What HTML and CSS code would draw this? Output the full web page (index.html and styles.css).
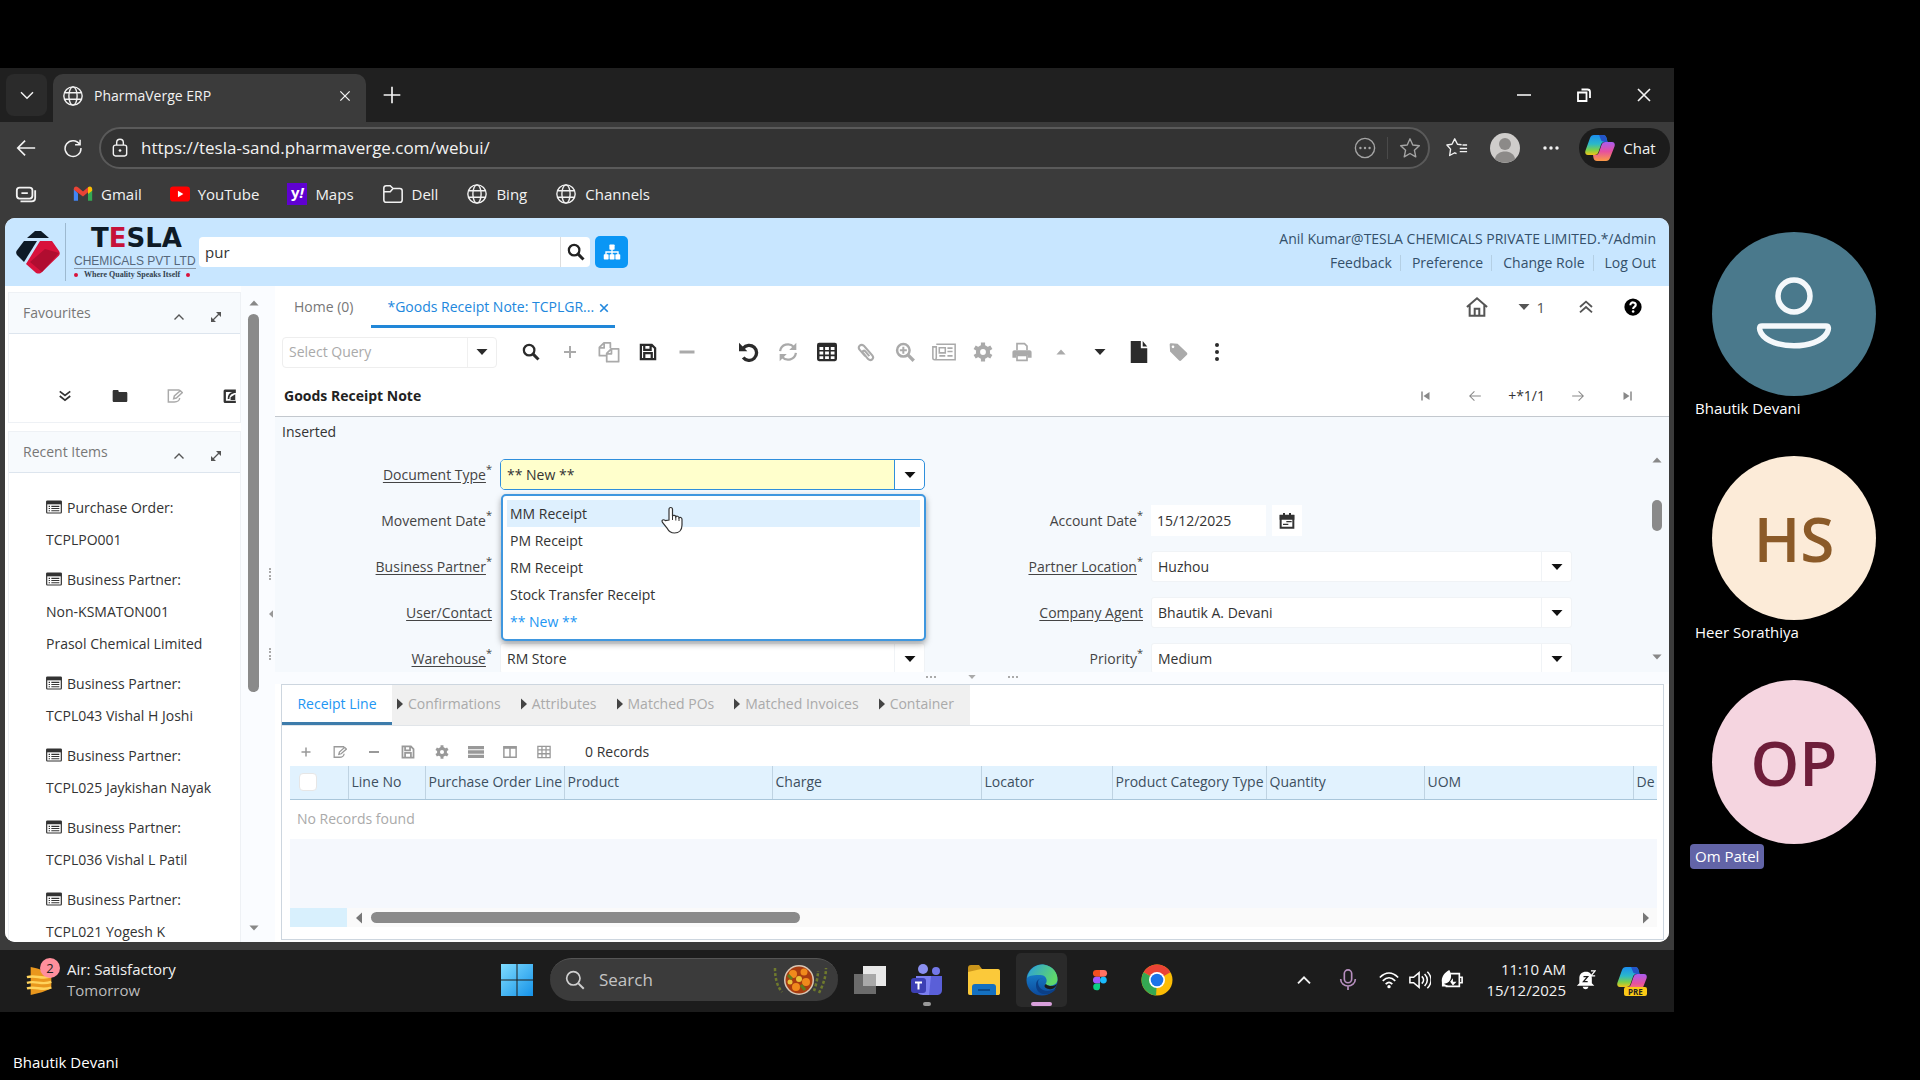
FILE: index.html
```html
<!DOCTYPE html>
<html lang="en">
<head>
<meta charset="utf-8">
<title>PharmaVerge ERP</title>
<link rel="stylesheet" href="styles.css">
</head>
<body>
<svg class="defs" aria-hidden="true">
  <defs>
    <linearGradient id="cpA" x1="0" y1="0" x2="0" y2="1"><stop offset="0" stop-color="#1b8df0"/><stop offset=".45" stop-color="#2bb8c9"/><stop offset=".75" stop-color="#7ccf4a"/><stop offset="1" stop-color="#f2c318"/></linearGradient>
    <linearGradient id="cpB" x1="0" y1="0" x2="0" y2="1"><stop offset="0" stop-color="#a85cf0"/><stop offset=".5" stop-color="#e6509f"/><stop offset="1" stop-color="#fb9a45"/></linearGradient>
    <linearGradient id="winG" x1="0" y1="0" x2="1" y2="1"><stop offset="0" stop-color="#7fdcff"/><stop offset="1" stop-color="#1592e8"/></linearGradient>
    <linearGradient id="edgeA" x1="0" y1="0" x2="1" y2=".4"><stop offset="0" stop-color="#2a9ce0"/><stop offset="1" stop-color="#5fd86a"/></linearGradient>
    <linearGradient id="edgeB" x1="0" y1="0" x2="0" y2="1"><stop offset="0" stop-color="#1b8fd8"/><stop offset="1" stop-color="#0c4a9c"/></linearGradient>
  </defs>
  <symbol id="globe" viewBox="0 0 24 24"><g fill="none" stroke="currentColor" stroke-width="1.5"><circle cx="12" cy="12" r="10"/><ellipse cx="12" cy="12" rx="4.5" ry="10"/><path d="M3 8.5h18M3 15.500h18"/></g></symbol>
  <symbol id="x" viewBox="0 0 24 24"><path d="M4 4l16 16M20 4L4 20" fill="none" stroke="currentColor" stroke-width="2.200"/></symbol>
  <symbol id="xb" viewBox="0 0 24 24"><path d="M3 3l18 18M21 3L3 21" fill="none" stroke="currentColor" stroke-width="4"/></symbol>
  <symbol id="plus" viewBox="0 0 24 24"><path d="M12 2v20M2 12h20" fill="none" stroke="currentColor" stroke-width="2"/></symbol>
  <symbol id="plusb" viewBox="0 0 24 24"><path d="M12 3v18M3 12h18" fill="none" stroke="currentColor" stroke-width="3"/></symbol>
  <symbol id="minusb" viewBox="0 0 24 24"><path d="M2 12h20" fill="none" stroke="currentColor" stroke-width="4"/></symbol>
  <symbol id="down" viewBox="0 0 24 24"><path d="M3 8l9 9 9-9" fill="none" stroke="currentColor" stroke-width="2.200"/></symbol>
  <symbol id="up" viewBox="0 0 24 24"><path d="M3 17l9-9 9 9" fill="none" stroke="currentColor" stroke-width="2.800"/></symbol>
  <symbol id="left" viewBox="0 0 24 24"><path d="M22 12H3M11 4l-8 8 8 8" fill="none" stroke="currentColor" stroke-width="1.800"/></symbol>
  <symbol id="right" viewBox="0 0 24 24"><path d="M2 12h19M13 4l8 8-8 8" fill="none" stroke="currentColor" stroke-width="1.800"/></symbol>
  <symbol id="first" viewBox="0 0 24 24"><path d="M4 3v18" fill="none" stroke="currentColor" stroke-width="3"/><path d="M19 4v16L7 12z" fill="currentColor"/></symbol>
  <symbol id="last" viewBox="0 0 24 24"><path d="M20 3v18" fill="none" stroke="currentColor" stroke-width="3"/><path d="M5 4v16l12-8z" fill="currentColor"/></symbol>
  <symbol id="reload" viewBox="0 0 24 24"><path d="M20 7.500A9.500 9.500 0 1 0 21.500 12M20.500 2v6h-6" fill="none" stroke="currentColor" stroke-width="1.800"/></symbol>
  <symbol id="lock" viewBox="0 0 24 24"><g fill="none" stroke="currentColor" stroke-width="1.700"><rect x="4" y="8.500" width="16" height="13" rx="2.500"/><path d="M8 8.500V5.500a4 4 0 0 1 8 0v3"/></g><circle cx="12" cy="15" r="1.600" fill="currentColor"/></symbol>
  <symbol id="dotring" viewBox="0 0 24 24"><circle cx="12" cy="12" r="10.500" fill="none" stroke="currentColor" stroke-width="1.500"/><g fill="currentColor"><circle cx="7" cy="12" r="1.300"/><circle cx="12" cy="12" r="1.300"/><circle cx="17" cy="12" r="1.300"/></g></symbol>
  <symbol id="star" viewBox="0 0 24 24"><path d="M12 2l3 6.700 7.200.800-5.400 4.900 1.500 7.200L12 18l-6.300 3.600 1.500-7.200-5.400-4.900 7.200-.800z" fill="none" stroke="currentColor" stroke-width="1.500" stroke-linejoin="round"/></symbol>
  <symbol id="starlist" viewBox="0 0 24 24"><path d="M17 8.500l-4.500-.600L9.500 2l-3 5.900-5.500.800 4 4.500-1 7 5.500-3 2 1M15 12.500h8M15 16h8M18 8.700h5" fill="none" stroke="currentColor" stroke-width="1.500" stroke-linejoin="round"/></symbol>
  <symbol id="dots" viewBox="0 0 24 24"><g fill="currentColor"><circle cx="4" cy="12" r="2.300"/><circle cx="12" cy="12" r="2.300"/><circle cx="20" cy="12" r="2.300"/></g></symbol>
  <symbol id="vdots" viewBox="0 0 24 24"><g fill="currentColor"><circle cx="12" cy="3.500" r="2.400"/><circle cx="12" cy="12" r="2.400"/><circle cx="12" cy="20.500" r="2.400"/></g></symbol>
  <symbol id="copilot" viewBox="0 0 30 28"><path d="M9 1h9c2 0 3 1 3.500 3l1 4h-3c-2 0-3 1-3.600 3l-2.400 7c-.7 2-1.800 3-4 3H3c-2.500 0-3.300-2-2.500-4.500L5 4c.7-2 2-3 4-3z" fill="url(#cpA)"/><path d="M21 27h-9c-2 0-3-1-3.500-3l-.500-3h2.500c2 0 3-1 3.600-3l2.400-7c.7-2 1.800-3 4-3H27c2.500 0 3.300 2 2.500 4.500L25 24c-.7 2-2 3-4 3z" fill="url(#cpB)"/><path d="M14 1h4c2 0 3 1 3.500 3l1 4h-3l-3-1z" fill="#2455c8"/></symbol>
  <symbol id="search" viewBox="0 0 24 24"><circle cx="9.500" cy="9.500" r="7" fill="none" stroke="currentColor" stroke-width="3"/><path d="M14.500 14.500L22 22" stroke="currentColor" stroke-width="4"/></symbol>
  <symbol id="searchthin" viewBox="0 0 24 24"><circle cx="10" cy="10" r="8" fill="none" stroke="currentColor" stroke-width="2"/><path d="M16 16l6.500 6.500" stroke="currentColor" stroke-width="2.400"/></symbol>
  <symbol id="sitemap" viewBox="0 0 24 24"><g fill="currentColor"><rect x="8.500" y="2" width="7" height="7" rx="1"/><rect x="1" y="15" width="6.500" height="7" rx="1"/><rect x="8.800" y="15" width="6.500" height="7" rx="1"/><rect x="16.500" y="15" width="6.500" height="7" rx="1"/></g><path d="M12 8v8M4 16v-4h16v4" fill="none" stroke="currentColor" stroke-width="1.800"/></symbol>
  <symbol id="expand" viewBox="0 0 24 24"><path d="M6 18L18 6" fill="none" stroke="currentColor" stroke-width="2.600"/><path d="M12 2h10v10zM12 22H2V12z" fill="currentColor"/></symbol>
  <symbol id="ddown" viewBox="0 0 24 24"><path d="M3 4l9 7 9-7M3 12l9 7 9-7" fill="none" stroke="currentColor" stroke-width="3"/></symbol>
  <symbol id="dup" viewBox="0 0 24 24"><path d="M3 12l9-8 9 8M3 20l9-8 9 8" fill="none" stroke="currentColor" stroke-width="2.800"/></symbol>
  <symbol id="folder" viewBox="0 0 24 24"><path d="M1 5c0-1.200.8-2 2-2h5c1.200 0 2 .8 2 2v1h11c1.200 0 2 .8 2 2v11c0 1.200-.8 2-2 2H3c-1.200 0-2-.8-2-2z" fill="currentColor"/></symbol>
  <symbol id="folderline" viewBox="0 0 24 24"><path d="M2 5.500C2 4 3 3 4.500 3H9l3 3h7.500C21 6 22 7 22 8.500v10c0 1.500-1 2.500-2.500 2.500h-15C3 21 2 20 2 18.500zM2 9.500h7l3-3.500" fill="none" stroke="currentColor" stroke-width="1.700"/></symbol>
  <symbol id="edit" viewBox="0 0 24 24"><path d="M19 3H2v18h9c5 0 8-3 8-6M10 16l1-4 9-8 3 3-9 8z" fill="none" stroke="currentColor" stroke-width="2.200"/></symbol>
  <symbol id="list" viewBox="0 0 24 24"><path d="M2 3h20c.6 0 1 .4 1 1v16c0 .6-.4 1-1 1H2c-.6 0-1-.4-1-1V4c0-.6.400-1 1-1z" fill="none" stroke="currentColor" stroke-width="1.800"/><path d="M1 5.500h22" stroke="currentColor" stroke-width="5"/><path d="M4 11h2M8 11h12M4 14.300h2M8 14.300h12M4 17.600h2M8 17.600h12" stroke="currentColor" stroke-width="1.700"/></symbol>
  <symbol id="book" viewBox="0 0 24 24"><path d="M5 1h17v6C15 7 11 11 11 17H8c0-7 3-11 8-12H5v15h17v4H4c-2 0-3-1-3-3V4c0-2 1-3 4-3z" fill="currentColor"/><path d="M13 14l8-5v10h-8z" fill="currentColor"/></symbol>
  <symbol id="home" viewBox="0 0 24 24"><path d="M1 12L12 2.500 23 12M4 10v11.500h16V10M9.500 21v-7h5v7" fill="none" stroke="currentColor" stroke-width="2.200"/></symbol>
  <symbol id="help" viewBox="0 0 24 24"><circle cx="12" cy="12" r="11.500" fill="#000"/><path d="M8.500 9.500c0-5 7.500-4.500 7.200-.3C15.500 12 12.200 11.500 12.200 14.500" fill="none" stroke="#fff" stroke-width="2.800"/><circle cx="12.200" cy="18" r="1.700" fill="#fff"/></symbol>
  <symbol id="caret" viewBox="0 0 24 24"><path d="M1 6h22L12 18z" fill="currentColor"/></symbol>
  <symbol id="caretup" viewBox="0 0 24 24"><path d="M1 18h22L12 6z" fill="currentColor"/></symbol>
  <symbol id="caretright" viewBox="0 0 24 24"><path d="M6 1v22l12-11z" fill="currentColor"/></symbol>
  <symbol id="caretleft" viewBox="0 0 24 24"><path d="M18 1v22L6 12z" fill="currentColor"/></symbol>
  <symbol id="copy" viewBox="0 0 24 24"><path d="M9.500 16H1.500V7l5-5h7v6M1.500 7.500h5.200V2M9.500 22.500v-9l5-5h8v14zM9.500 14h5.200V8.500" fill="none" stroke="currentColor" stroke-width="1.900" stroke-linejoin="round"/></symbol>
  <symbol id="save" viewBox="0 0 24 24"><path d="M2.500 2.500h14.500l4.500 4.500v14.500h-19zM7 21v-7.500h10V21M7 3v6h8.500V3" fill="none" stroke="currentColor" stroke-width="3"/></symbol>
  <symbol id="undo" viewBox="0 0 24 24"><path d="M5 7.500a9 9 0 1 1 0 11" fill="none" stroke="currentColor" stroke-width="4"/><path d="M0 1v10h10z" fill="currentColor"/></symbol>
  <symbol id="refresh" viewBox="0 0 24 24"><path d="M2.500 11A9.500 9.500 0 0 1 19 6M21.500 13A9.500 9.500 0 0 1 5 18" fill="none" stroke="currentColor" stroke-width="2.700"/><path d="M22 1v8.500h-8.500zM2 23v-8.500h8.500z" fill="currentColor"/></symbol>
  <symbol id="grid" viewBox="0 0 24 24"><rect x="0" y="1" width="24" height="22" rx="2.500" fill="currentColor"/><g fill="#fff"><path d="M3 6h4.500v3.500H3zM9.700 6h4.600v3.500H9.700zM16.500 6H21v3.500h-4.500zM3 11.500h4.500V15H3zM9.700 11.500h4.600V15H9.700zM16.500 11.500H21V15h-4.500zM3 17h4.500v3.500H3zM9.700 17h4.600v3.500H9.700zM16.500 17H21v3.500h-4.500z"/></g></symbol>
  <symbol id="clip" viewBox="0 0 24 24"><path d="M11 17L4.500 9.500C1.500 6 5.500 1.500 9.500 4.500l10 11.500c3 4-1.500 7.500-5 4.500L8.500 13c-1.500-2 1-3.500 2.500-2l5 6" fill="none" stroke="currentColor" stroke-width="2.500"/></symbol>
  <symbol id="zoom" viewBox="0 0 24 24"><circle cx="10" cy="10" r="7.500" fill="none" stroke="currentColor" stroke-width="3"/><path d="M15.500 15.500L22.500 22.500" stroke="currentColor" stroke-width="4"/><path d="M10 5.800v8.400M5.800 10h8.400" stroke="currentColor" stroke-width="2.400"/></symbol>
  <symbol id="news" viewBox="0 0 28 24"><path d="M5 3h22v18H3c-1.500 0-2-1-2-2V6h4v13c0 2-2 2-2 2M8.500 7h7v6h-7zM18 7.500h6M18 11.500h6M8.500 16.500h7M18 16.500h6" fill="none" stroke="currentColor" stroke-width="1.800"/></symbol>
  <symbol id="gear" viewBox="0 0 24 24"><circle cx="12" cy="12" r="6" fill="none" stroke="currentColor" stroke-width="5"/><path d="M12 .500v5M12 18.500v5M2 6.300l4.300 2.500M17.700 15.200l4.300 2.500M2 17.700l4.300-2.500M17.700 8.800L22 6.300" stroke="currentColor" stroke-width="5"/></symbol>
  <symbol id="print" viewBox="0 0 24 24"><path d="M6 10V2h9l3 3v5M6 16h12v6H6z" fill="none" stroke="currentColor" stroke-width="2"/><path d="M3 10h18c1.500 0 2.500 1 2.500 2.500V19H19v-3.500H5V19H.5v-6.500C.5 11 1.500 10 3 10z" fill="currentColor"/></symbol>
  <symbol id="file" viewBox="0 0 24 24"><path d="M3 0h11v8h7v16H3z" fill="currentColor"/><path d="M16 0l5 6h-5z" fill="currentColor"/></symbol>
  <symbol id="tag" viewBox="0 0 24 24"><path d="M2 3c0-1 .8-1.500 2-1.500L11.500 2 22.500 12.500c1 1 1 2 0 3L16 22c-1 1-2 1-3 0L2.500 11.500z" fill="currentColor"/><circle cx="6" cy="5.800" r="1.600" fill="#fff"/></symbol>
  <symbol id="calendar" viewBox="0 0 24 24"><path d="M2.500 4h19v18h-19z" fill="#fff" stroke="currentColor" stroke-width="3"/><path d="M1 3h22v7H1zM6 0h3v4H6zM15 0h3v4h-3z" fill="currentColor"/><path d="M11 13h8M6 17h8" stroke="currentColor" stroke-width="2"/></symbol>
  <symbol id="rows" viewBox="0 0 24 24"><path d="M0 3h24v5H0zM0 9.500h24v5H0zM0 16h24v5H0z" fill="currentColor"/></symbol>
  <symbol id="cols" viewBox="0 0 24 24"><path d="M1.500 3h21v18h-21zM12 3v18" fill="none" stroke="currentColor" stroke-width="2.500"/><path d="M1 4.500h22" stroke="currentColor" stroke-width="4"/></symbol>
  <symbol id="cells" viewBox="0 0 24 24"><path d="M1.500 2.500h21v19h-21zM8.500 3v18M15.500 3v18M2 8.500h20M2 15h20" fill="none" stroke="currentColor" stroke-width="2.200"/></symbol>
</svg>

<div class="call">
  <div class="share">
    <header class="tabstrip">
      <button class="tabmenu" aria-label="Tab actions"><svg class="i16"><use href="#down"/></svg></button>
      <div class="tab">
        <svg class="i22"><use href="#globe"/></svg><span>PharmaVerge ERP</span>
        <button class="tabclose" aria-label="Close tab"><svg class="i14"><use href="#x"/></svg></button>
      </div>
      <button aria-label="New tab"><svg class="i20"><use href="#plus"/></svg></button>
      <div class="wincontrols">
        <button aria-label="Minimise"><svg class="i14" viewBox="0 0 14 14"><path d="M0 7h14" stroke="#fff" stroke-width="1.500"/></svg></button>
        <button aria-label="Restore"><svg class="i14" viewBox="0 0 14 14"><path d="M1 4.500h8.500V13H1zM4.500 1.500h6c1.500 0 2.500 1 2.500 2.500v6" fill="none" stroke="#fff" stroke-width="1.800"/></svg></button>
        <button aria-label="Close"><svg class="i18"><use href="#x"/></svg></button>
      </div>
    </header>
    <div class="navbar">
      <button aria-label="Back"><svg class="i22"><use href="#left"/></svg></button>
      <button aria-label="Reload"><svg class="i20"><use href="#reload"/></svg></button>
      <div class="address">
        <svg class="i20"><use href="#lock"/></svg>
        <input type="text" aria-label="Address" value="https://tesla-sand.pharmaverge.com/webui/">
        <svg class="i22 dim"><use href="#dotring"/></svg><i class="bar"></i><svg class="i22 dim"><use href="#star"/></svg>
      </div>
      <button aria-label="Favourites"><svg class="i22"><use href="#starlist"/></svg></button>
      <button aria-label="Profile"><svg class="i30" viewBox="0 0 30 30"><circle cx="15" cy="15" r="15" fill="#cfcdcb"/><circle cx="15" cy="11" r="6" fill="#8c8a88"/><path d="M5 26c1-10 19-10 20 0a15 15 0 0 1-20 0z" fill="#8c8a88"/></svg></button>
      <button aria-label="Settings"><svg class="i18"><use href="#dots"/></svg></button>
      <button class="chat"><svg class="i30"><use href="#copilot"/></svg>Chat</button>
    </div>
    <nav class="bookmarks">
      <a href="#" aria-label="Tabs"><svg class="i22" viewBox="0 0 24 24"><g fill="none" stroke="currentColor" stroke-width="2"><rect x="2" y="5" width="17" height="12" rx="3"/><path d="M7 11h7M6 20h12c2.500 0 4-1.500 4-4V8"/></g></svg></a>
      <a href="#"><svg class="i20" viewBox="0 0 24 24"><path d="M1 6v14h5V11z" fill="#4285f4"/><path d="M23 6v14h-5V11z" fill="#34a853"/><path d="M1 6c0-3 3-4 5-2l6 5v6L1 7z" fill="#ea4335"/><path d="M12 9l6-5v6l-6 5z" fill="#ea4335"/><path d="M18 4c2-2 5-1 5 2v2l-5 4z" fill="#fbbc04"/></svg>Gmail</a>
      <a href="#"><svg class="i20" viewBox="0 0 24 24"><rect y="3" width="24" height="18" rx="4" fill="#f00"/><path d="M9.500 8v8l6.500-4z" fill="#fff"/></svg>YouTube</a>
      <a href="#"><b class="yahoo">y<i>!</i></b>Maps</a>
      <a href="#"><svg class="i22"><use href="#folderline"/></svg>Dell</a>
      <a href="#"><svg class="i22"><use href="#globe"/></svg>Bing</a>
      <a href="#"><svg class="i22"><use href="#globe"/></svg>Channels</a>
    </nav>

    <div class="page">
      <header class="apphead">
        <svg class="mark" viewBox="0 0 44 44"><path d="M11 8L19 1h6l8 7z" fill="#0e1a26"/><path d="M8 11h13L8 32 1 25c-1-1-1-3-.5-4z" fill="#0e1a26"/><path d="M24 11h12l7 10c1 1.500 1 3 0 4.500L26 42c-2 2-5 2-7 0L10 34z" fill="#d8123c"/><path d="M29 19l14 4-17 19-12-10z" fill="#b00d30"/></svg>
        <div class="brand"><strong>T<em>E</em>SLA</strong><span>CHEMICALS PVT LTD</span><small><i></i>Where Quality Speaks Itself<i></i></small></div>
        <form class="find"><input type="text" aria-label="Search menu" value="pur"><button type="button" aria-label="Search"><svg class="i18"><use href="#search"/></svg></button></form>
        <button class="tree" aria-label="Menu tree"><svg class="i18"><use href="#sitemap"/></svg></button>
        <div class="user">
          <span>Anil Kumar@TESLA CHEMICALS PRIVATE LIMITED.*/Admin</span>
          <nav><a href="#">Feedback</a><a href="#">Preference</a><a href="#">Change Role</a><a href="#">Log Out</a></nav>
        </div>
      </header>

      <div class="appbody">
        <aside class="side">
          <section class="panel">
            <h2>Favourites<button aria-label="Collapse"><svg class="i12"><use href="#up"/></svg></button><button aria-label="Maximise"><svg class="i12"><use href="#expand"/></svg></button></h2>
            <div class="favtools">
              <button aria-label="Expand all"><svg class="i14"><use href="#ddown"/></svg></button>
              <button aria-label="Folder"><svg class="i16"><use href="#folder"/></svg></button>
              <button aria-label="Edit" class="off"><svg class="i16"><use href="#edit"/></svg></button>
              <button aria-label="Add"><svg class="i14"><use href="#book"/></svg></button>
            </div>
          </section>
          <section class="panel recent">
            <h2>Recent Items<button aria-label="Collapse"><svg class="i12"><use href="#up"/></svg></button><button aria-label="Maximise"><svg class="i12"><use href="#expand"/></svg></button></h2>
            <ul>
              <li><a href="#"><svg class="i16"><use href="#list"/></svg>Purchase Order:<br>TCPLPO001</a></li>
              <li><a href="#"><svg class="i16"><use href="#list"/></svg>Business Partner:<br>Non-KSMATON001<br>Prasol Chemical Limited</a></li>
              <li><a href="#"><svg class="i16"><use href="#list"/></svg>Business Partner:<br>TCPL043 Vishal H Joshi</a></li>
              <li><a href="#"><svg class="i16"><use href="#list"/></svg>Business Partner:<br>TCPL025 Jaykishan Nayak</a></li>
              <li><a href="#"><svg class="i16"><use href="#list"/></svg>Business Partner:<br>TCPL036 Vishal L Patil</a></li>
              <li><a href="#"><svg class="i16"><use href="#list"/></svg>Business Partner:<br>TCPL021 Yogesh K</a></li>
            </ul>
          </section>
        </aside>
        <div class="vscroll"><svg class="i10"><use href="#caretup"/></svg><i></i><svg class="i10"><use href="#caret"/></svg></div>
        <div class="split"><i class="grip"></i><svg class="i8"><use href="#caretleft"/></svg><i class="grip"></i></div>

        <main>
          <div class="wtabs">
            <a href="#">Home (0)</a>
            <a href="#" class="on">*Goods Receipt Note: TCPLGR...<svg class="i10"><use href="#xb"/></svg></a>
            <div class="wright">
              <button aria-label="Home"><svg class="i22"><use href="#home"/></svg></button>
              <button class="count"><svg class="i12"><use href="#caret"/></svg>1</button>
              <button aria-label="Collapse header"><svg class="i16"><use href="#dup"/></svg></button>
              <button aria-label="Help"><svg class="i18"><use href="#help"/></svg></button>
            </div>
          </div>
          <div class="toolbar">
            <div class="query"><input type="text" aria-label="Query" placeholder="Select Query"><button aria-label="Open queries"><svg class="i12"><use href="#caret"/></svg></button></div>
            <div class="tools">
              <button aria-label="Find"><svg class="i18"><use href="#search"/></svg></button>
              <button aria-label="New" class="off"><svg class="i16"><use href="#plusb"/></svg></button>
              <button aria-label="Copy" class="off"><svg class="i22"><use href="#copy"/></svg></button>
              <button aria-label="Save"><svg class="i18"><use href="#save"/></svg></button>
              <button aria-label="Delete" class="off"><svg class="i18"><use href="#minusb"/></svg></button>
            </div>
            <div class="tools">
              <button aria-label="Undo"><svg class="i20"><use href="#undo"/></svg></button>
              <button aria-label="Refresh" class="off"><svg class="i20"><use href="#refresh"/></svg></button>
              <button aria-label="Grid"><svg class="i20"><use href="#grid"/></svg></button>
              <button aria-label="Attachment" class="off"><svg class="i20"><use href="#clip"/></svg></button>
              <button aria-label="Zoom" class="off"><svg class="i20"><use href="#zoom"/></svg></button>
              <button aria-label="Report" class="off"><svg class="i24"><use href="#news"/></svg></button>
              <button aria-label="Process" class="off"><svg class="i20"><use href="#gear"/></svg></button>
              <button aria-label="Print" class="off"><svg class="i20"><use href="#print"/></svg></button>
              <button aria-label="Parent" class="off"><svg class="i10"><use href="#caretup"/></svg></button>
              <button aria-label="Detail"><svg class="i12"><use href="#caret"/></svg></button>
              <button aria-label="File"><svg class="i22"><use href="#file"/></svg></button>
              <button aria-label="Label" class="off"><svg class="i20"><use href="#tag"/></svg></button>
              <button aria-label="More"><svg class="i20"><use href="#vdots"/></svg></button>
            </div>
          </div>
          <div class="titlebar">
            <h1>Goods Receipt Note</h1>
            <div class="pager">
              <button aria-label="First"><svg class="i12"><use href="#first"/></svg></button>
              <button aria-label="Previous"><svg class="i14"><use href="#left"/></svg></button>
              <span>+*1/1</span>
              <button aria-label="Next"><svg class="i14"><use href="#right"/></svg></button>
              <button aria-label="Last"><svg class="i12"><use href="#last"/></svg></button>
            </div>
          </div>

          <div class="formwrap">
            <p class="status">Inserted</p>
            <form class="grid">
              <label for="doctype"><u>Document Type</u><sup>*</sup></label>
              <div class="sel active"><select id="doctype"><option>** New **</option></select><span><svg class="i12"><use href="#caret"/></svg></span>
                <ul class="menu"><li class="hover">MM Receipt</li><li>PM Receipt</li><li>RM Receipt</li><li>Stock Transfer Receipt</li><li class="chosen">** New **</li></ul>
                <svg class="hand" viewBox="0 0 24 28"><path d="M9 14V3.500c0-2.700 3.500-2.700 3.500 0V10c.5-1 3-1 3.300.8.7-1 2.900-.8 3.200 1 .800-.8 3-.5 3 1.700V19c0 5-3 8-7.500 8-4 0-6-2-7.500-5l-4.500-5.500c-1.500-2.500 1-3.500 2.800-2z" fill="#fff" stroke="#333" stroke-width="1.200"/><path d="M12.500 10v4M15.800 11v3.500M19 12v3" stroke="#333"/></svg>
              </div>
              <i></i><i></i>

              <label for="movedate">Movement Date<sup>*</sup></label>
              <div class="date"><input id="movedate" type="text"></div>
              <label for="acctdate">Account Date<sup>*</sup></label>
              <div class="date"><input id="acctdate" type="text" value="15/12/2025"><button type="button" aria-label="Pick date"><svg class="i16"><use href="#calendar"/></svg></button></div>

              <label for="bp"><u>Business Partner</u><sup>*</sup></label>
              <div class="sel"><select id="bp"><option></option></select><span><svg class="i12"><use href="#caret"/></svg></span></div>
              <label for="loc"><u>Partner Location</u><sup>*</sup></label>
              <div class="sel"><select id="loc"><option>Huzhou</option></select><span><svg class="i12"><use href="#caret"/></svg></span></div>

              <label for="contact"><u>User/Contact</u></label>
              <div class="sel"><select id="contact"><option></option></select><span><svg class="i12"><use href="#caret"/></svg></span></div>
              <label for="agent"><u>Company Agent</u></label>
              <div class="sel"><select id="agent"><option>Bhautik A. Devani</option></select><span><svg class="i12"><use href="#caret"/></svg></span></div>

              <label for="wh"><u>Warehouse</u><sup>*</sup></label>
              <div class="sel"><select id="wh"><option>RM Store</option></select><span><svg class="i12"><use href="#caret"/></svg></span></div>
              <label for="prio">Priority<sup>*</sup></label>
              <div class="sel"><select id="prio"><option>Medium</option></select><span><svg class="i12"><use href="#caret"/></svg></span></div>
            </form>
            <div class="fscroll"><svg class="i10"><use href="#caretup"/></svg><i></i><svg class="i10"><use href="#caret"/></svg></div>
          </div>
          <div class="hsplit"><i class="grip"></i><svg class="i8"><use href="#caret"/></svg><i class="grip"></i></div>

          <section class="detail">
            <nav class="dtabs">
              <a href="#" class="on">Receipt Line</a>
              <div>
                <a href="#"><svg class="i12"><use href="#caretright"/></svg>Confirmations</a>
                <a href="#"><svg class="i12"><use href="#caretright"/></svg>Attributes</a>
                <a href="#"><svg class="i12"><use href="#caretright"/></svg>Matched POs</a>
                <a href="#"><svg class="i12"><use href="#caretright"/></svg>Matched Invoices</a>
                <a href="#"><svg class="i12"><use href="#caretright"/></svg>Container</a>
              </div>
            </nav>
            <div class="dtools">
              <button aria-label="Add"><svg class="i12"><use href="#plusb"/></svg></button>
              <button aria-label="Edit"><svg class="i14"><use href="#edit"/></svg></button>
              <button aria-label="Remove"><svg class="i12"><use href="#minusb"/></svg></button>
              <button aria-label="Save"><svg class="i14"><use href="#save"/></svg></button>
              <button aria-label="Process"><svg class="i14"><use href="#gear"/></svg></button>
              <button aria-label="Form"><svg class="i16"><use href="#rows"/></svg></button>
              <button aria-label="Columns"><svg class="i14"><use href="#cols"/></svg></button>
              <button aria-label="Grid"><svg class="i14"><use href="#cells"/></svg></button>
              <span>0 Records</span>
            </div>
            <div class="gridbox">
              <table>
                <colgroup><col class="c58"><col class="c77"><col class="c139"><col class="c208"><col class="c209"><col class="c131"><col class="c154"><col class="c158"><col class="c209"><col></colgroup>
                <thead><tr><th><input type="checkbox" aria-label="Select all"></th><th>Line No</th><th>Purchase Order Line</th><th>Product</th><th>Charge</th><th>Locator</th><th>Product Category Type</th><th>Quantity</th><th>UOM</th><th>De</th></tr></thead>
                <tbody><tr><td colspan="10">No Records found</td></tr></tbody>
              </table>
              <div class="hscroll"><b></b><svg class="i12"><use href="#caretleft"/></svg><i></i><svg class="i12 end"><use href="#caretright"/></svg></div>
            </div>
          </section>
        </main>
      </div>
    </div>

    <footer class="taskbar">
      <button class="weather">
        <span class="wicon"><svg class="i30" viewBox="0 0 30 32"><path d="M4 2c10 2 18 5 22 9v14l-10 4-12 3z" fill="#e9971d"/><path d="M0 13c10-3 15 3 26-1M0 19c10-3 15 3 26-1M0 25c10-3 15 3 26-1" fill="none" stroke="#ffd35c" stroke-width="2.500"/></svg><b>2</b></span>
        <span class="two"><span>Air: Satisfactory</span><small>Tomorrow</small></span>
      </button>
      <div class="apps">
        <button aria-label="Start"><svg class="i32" viewBox="0 0 32 32"><path d="M0 0h15.500v15.500H0zM16.500 0H32v15.500H16.500zM0 16.500h15.500V32H0zM16.500 16.500H32V32H16.500z" fill="url(#winG)"/></svg></button>
        <div class="tsearch"><svg class="i20"><use href="#searchthin"/></svg><input type="text" aria-label="Search" placeholder="Search">
          <svg class="bowl" viewBox="0 0 56 34"><g fill="none" stroke="#6f7a2d" stroke-width="2.500" stroke-dasharray="3 2"><path d="M2 5c0 10 2 18 7 24M46 30c4-8 7-16 7-25M41 28c2-6 4-14 4-20"/></g><circle cx="26" cy="17" r="15" fill="#d9c8b6"/><circle cx="26" cy="17" r="13.500" fill="#a83c10"/><g fill="#f08a1c"><circle cx="20" cy="11" r="4"/><circle cx="31" cy="9" r="3.500"/><circle cx="33" cy="19" r="4"/><circle cx="23" cy="24" r="4"/></g><g fill="#e9c23a"><circle cx="26" cy="16" r="3"/><circle cx="17" cy="19" r="2.500"/></g><path d="M28 22l4 5M15 12l4 4" stroke="#5e7d1d" stroke-width="3"/></svg></div>
        <button aria-label="Task view"><svg class="i32" viewBox="0 0 32 32"><path d="M0 10h22v20H0z" fill="#6b6b6b"/><path d="M9 2h23v20H9z" fill="#e8e8e8"/><path d="M9 10h13v12H9z" fill="#a8a8a8"/></svg></button>
        <button aria-label="Teams" class="running"><svg class="i32" viewBox="0 0 32 32"><circle cx="12" cy="5" r="5" fill="#8b90f0"/><circle cx="25" cy="7" r="4" fill="#7378e8"/><path d="M5 12h15v19h-8c-5 0-7-3-7-7z" fill="#7b7ff0"/><path d="M20 12h11v14c0 4-3 5-5 5h-8z" fill="#5a5fd8"/><rect y="14" width="15" height="15" rx="3" fill="#3c3fb4"/><path d="M4 18.500h7M7.500 18.500v7" stroke="#fff" stroke-width="2"/></svg></button>
        <button aria-label="File Explorer"><svg class="i32" viewBox="0 0 32 32"><path d="M0 4c0-2 1-3 3-3h8l3 4h14v6H0z" fill="#c9941b"/><path d="M0 8l13-3h17c1.500 0 2 1 2 2v22c0 1.500-1 2-2 2H2c-1.500 0-2-1-2-2z" fill="#fbc93a"/><path d="M4 31V23c0-2 1-3 3-3h18c2 0 3 1 3 3v8z" fill="#1470c0"/><path d="M10 26h12" stroke="#0a4b8c" stroke-width="2"/></svg></button>
        <button aria-label="Edge" class="current"><svg class="i32" viewBox="0 0 32 32"><circle cx="16" cy="16" r="15.500" fill="url(#edgeB)"/><path d="M1 14C3 4 12 0 18 .7 27 2 32 9 31.500 16c-.5 6-9 7-12 4 3-4 0-9-5-9-6 0-11 0-13.500 3z" fill="url(#edgeA)"/><path d="M12 18c0 7 7 11 14 8l4-1c-6 8-20 7-20-4 0-5 4-7 7-7-3 0-5 2-5 4z" fill="#0b3f86"/><path d="M20 20c2 3 9 2.500 11 0-1 3-4 6-8 5-4-.5-6-3-3-5z" fill="#1c1c1c"/></svg></button>
        <button aria-label="Figma"><svg class="i22" viewBox="0 0 24 24"><path d="M12 1H8a3.700 3.700 0 0 0 0 7.400h4z" fill="#f24e1e"/><path d="M12 1h4a3.700 3.700 0 0 1 0 7.400h-4z" fill="#ff7262"/><path d="M12 8.400H8a3.700 3.700 0 0 0 0 7.400h4z" fill="#a259ff"/><circle cx="15.700" cy="12.100" r="3.700" fill="#1abcfe"/><path d="M12 15.800H8a3.700 3.700 0 1 0 4 3.700z" fill="#0acf83"/></svg></button>
        <button aria-label="Chrome"><svg class="i32" viewBox="0 0 32 32"><circle cx="16" cy="16" r="15.500" fill="#fbbc05"/><path d="M16 16L2.600 8.200A15.500 15.500 0 0 1 29.400 8.200z" fill="#ea4335"/><path d="M16 16l-1 15.500A15.500 15.500 0 0 1 2.600 8.200z" fill="#34a853"/><circle cx="16" cy="16" r="8" fill="#fff"/><circle cx="16" cy="16" r="6.300" fill="#1a73e8"/></svg></button>
      </div>
      <div class="tray">
        <svg class="i16"><use href="#up"/></svg>
        <svg class="i22" viewBox="0 0 24 24"><g fill="none" stroke="#b78fbf" stroke-width="1.800"><rect x="8" y="1" width="8" height="14" rx="4"/><path d="M4 11c0 10 16 10 16 0M12 18.500V23"/></g></svg>
        <svg class="i20" viewBox="0 0 24 24"><g fill="none" stroke="#fff" stroke-width="2"><path d="M1 9c7-7 15-7 22 0M4.500 13c5-5 10-5 15 0M8 17c3-3 5-3 8 0"/></g><circle cx="12" cy="20" r="2" fill="#fff"/></svg>
        <svg class="i22" viewBox="0 0 24 24"><path d="M1 9h4l6-5v16l-6-5H1zM14 8c2.500 2.500 2.500 5.500 0 8M17 5.500c4 4 4 9 0 13M20 3c5.500 5.500 5.500 12.500 0 18" fill="none" stroke="#fff" stroke-width="1.700"/></svg>
        <svg class="i22" viewBox="0 0 24 24"><path d="M10 5h10v14H5M20 9h3v6h-3" fill="none" stroke="#fff" stroke-width="1.800"/><path d="M1 15C0 8 4 4 9 1c3 5 3 11-2 14-2 1-3 1-4 1l6 3-8 0zM10 14l3-4v4h4l-4 4z" fill="#fff"/></svg>
        <div class="clock"><span>11:10 AM</span><span>15/12/2025</span></div>
        <svg class="i20" viewBox="0 0 24 24"><path d="M12 2c5 0 7 3 7 8v6l3 3H1l3-3v-6c0-5 3-8 8-8zM8 20h7c-1 4-6 4-7 0z" fill="#fff"/><path d="M9 8h5l-5 6h5" fill="none" stroke="#1c1c1c" stroke-width="1.600"/><path d="M18 1h5l-5 6h5" fill="none" stroke="#fff" stroke-width="1.600"/></svg>
        <span class="pre"><svg class="i30"><use href="#copilot"/></svg><b>PRE</b></span>
      </div>
    </footer>
  </div>

  <aside class="people">
    <figure><div class="face teal"><svg viewBox="0 0 164 164"><g fill="none" stroke="#f4f8fb" stroke-width="5.500"><circle cx="82" cy="64" r="16"/><path d="M50 94h64c3 0 3 3 1 7-10 17-56 17-66 0-2-4-2-7 1-7z"/></g></svg></div><figcaption>Bhautik Devani</figcaption></figure>
    <figure><div class="face sand">HS</div><figcaption>Heer Sorathiya</figcaption></figure>
    <figure><div class="face pink">OP</div><figcaption class="talking">Om Patel</figcaption></figure>
  </aside>
</div>
<p class="presenter">Bhautik Devani</p>
</body>
</html>
```
FILE: styles.css
```css
* { box-sizing: border-box; }
body { margin: 0; background: #000; color: #333; font: 15px/20px "Open Sans", "Noto Sans", sans-serif; min-height: 100vh; display: flex; flex-direction: column; padding-top: 68px; }
button, input, select { font: inherit; color: inherit; background: none; border: 0; padding: 0; margin: 0; outline: 0; }
button { display: flex; align-items: center; justify-content: center; }
a { color: inherit; text-decoration: none; }
ul, p, figure, h1, h2 { margin: 0; padding: 0; list-style: none; }
i { font-style: normal; }
svg { flex: none; display: block; }
.defs { position: absolute; width: 0; height: 0; }
.i8 { width: 8px; height: 8px; } .i10 { width: 10px; height: 10px; } .i12 { width: 12px; height: 12px; }
.i14 { width: 14px; height: 14px; } .i16 { width: 16px; height: 16px; } .i18 { width: 18px; height: 18px; }
.i20 { width: 20px; height: 20px; } .i22 { width: 22px; height: 22px; } .i24 { width: 24px; height: 24px; }
.i30 { width: 30px; height: 30px; } .i32 { width: 32px; height: 32px; }

.call { display: flex; }
.share { flex: 1; min-width: 0; background: #3b3b3b; color: #f2f2f2; }

/* browser chrome */
.tabstrip { display: flex; height: 54px; background: #202020; padding: 6px 0 0 6px; }
.tabmenu { width: 41px; height: 42px; background: #2b2b2b; border-radius: 8px; }
.tab { display: flex; align-items: center; gap: 10px; width: 313px; margin: 0 16px 0 6px; padding: 0 14px 4px 9px; background: #3b3b3b; border-radius: 10px 10px 0 0; font-size: 14px; }
.tabclose { margin-left: auto; }
.tabstrip > button { align-self: flex-start; height: 42px; }
.wincontrols { display: flex; margin-left: auto; height: 42px; }
.wincontrols button { width: 60px; }
.navbar { display: flex; align-items: center; height: 52px; padding: 0 4px 0 15px; }
.navbar > button { flex: none; margin-left: 22px; }
.navbar > button:first-child { margin-left: 0; }
.navbar > button:nth-child(2) { margin-left: 26px; }
.navbar .address { flex: 1; display: flex; align-items: center; gap: 11px; height: 42px; margin-left: 16px; margin-right: -6px; padding: 0 7px 0 9px; border: 2px solid #5a5a5a; border-radius: 21px; background: #333; }
.address input { flex: 1; font-size: 17px; }
.address .bar { width: 1px; height: 22px; background: #4a4a4a; }
.dim { color: #a5a5a5; }
.navbar .chat { gap: 8px; height: 40px; width: 91px; margin-left: 19px; background: #1c1c1c; border-radius: 20px; padding-right: 8px; }
.bookmarks { display: flex; align-items: center; height: 44px; padding: 0 15px 4px; gap: 28px; }
.bookmarks a { display: flex; align-items: center; gap: 8px; }
.bookmarks a:first-child { padding-right: 8px; }
.yahoo { width: 20px; height: 22px; background: #5f01d1; color: #fff; text-align: center; line-height: 18px; }
.yahoo i { font-style: italic; }

/* application */
.page { margin: 0 5px 8px; background: #fafcff; border-radius: 10px; overflow: hidden; color: #333; }
.apphead { display: flex; align-items: center; height: 68px; background: #c8e6ff; padding: 0 13px 0 11px; }
.mark { width: 44px; height: 44px; margin-right: 5px; }
.brand { width: 134px; border-left: 1px solid #9db9d0; padding-left: 8px; display: flex; flex-direction: column; align-items: flex-start; }
.brand strong { font: bold 26px/31px "DejaVu Sans", sans-serif; color: #0e1a26; align-self: center; }
.brand em { font-style: normal; color: #c6123a; }
.brand span { font: 12px/14px "Liberation Sans", sans-serif; color: #56677a; border-bottom: 1px solid #8a9aab; white-space: nowrap; }
.brand small { font: bold 8px/12px "Liberation Serif", serif; color: #33424f; display: flex; align-items: center; gap: 6px; white-space: nowrap; }
.brand small i { width: 4px; height: 4px; border-radius: 2px; background: #d8123c; }
.find { display: flex; width: 391px; height: 30px; background: #fff; border-radius: 4px; }
.find input { flex: 1; padding-left: 6px; }
.find button { width: 30px; border-left: 1px solid #ddd; color: #222; }
.tree { width: 33px; height: 32px; margin-left: 5px; border-radius: 5px; background: #0a96f5; color: #fff; }
.user { margin-left: auto; text-align: right; font-size: 14px; color: #34506a; line-height: 20px; padding-bottom: 4px; }
.user nav { display: flex; justify-content: flex-end; }
.user nav a { line-height: 16px; padding-left: 11px; margin-left: 8px; border-left: 1px solid #b4cfe4; margin-top: 6px; }
.user nav a:first-child { border: 0; }

.appbody { display: flex; height: 656px; }
.side { width: 236px; padding: 6px 0 0 3px; display: flex; flex-direction: column; gap: 8px; background: #fff; overflow: hidden; }
.panel { border: 1px solid #eef1f5; }
.panel h2 { display: flex; align-items: center; height: 41px; padding: 0 18px 0 14px; background: #f7fafd; border-bottom: 1px solid #dde5ee; font-weight: 400; font-size: 14px; color: #777; }
.panel h2 button { margin-left: 25px; padding-top: 8px; color: #555; }
.panel h2 button:nth-of-type(1) { margin-left: auto; }
.favtools { display: flex; height: 88px; padding: 45px 0 0 36px; overflow: hidden; }
.favtools button { flex: none; width: 40px; height: 34px; margin-right: 15px; }
.recent { flex: 1; border-bottom: 0; }
.recent ul { padding: 19px 0 0 37px; }
.recent li { margin-bottom: 8px; font-size: 14px; line-height: 32px; white-space: nowrap; }
.recent li svg { display: inline-block; vertical-align: -2px; margin-right: 5px; }
.vscroll { width: 25px; display: flex; flex-direction: column; align-items: center; padding: 12px 0 9px; color: #888; }
.vscroll i { width: 11px; height: 378px; margin: 6px 0 auto; background: #8a8a8a; border-radius: 6px; }
.split { width: 9px; display: flex; flex-direction: column; align-items: center; justify-content: center; gap: 30px; color: #999; }
.grip { height: 12px; width: 4px; border-left: 2px dotted #aaa; }

main { flex: 1; min-width: 0; display: flex; flex-direction: column; background: #fff; }
.wtabs { display: flex; height: 42px; padding-left: 2px; color: #777; font-size: 14px; }
.wtabs > a { padding: 11px 17px 0; margin-right: 1px; }
.wtabs .on { display: flex; gap: 5px; color: #2187dd; border-bottom: 3px solid #2187d8; padding: 11px 6px 0 16px; }
.wtabs .on svg { margin-top: 6px; }
.wright { margin-left: auto; display: flex; align-items: center; gap: 30px; padding-right: 27px; color: #555; font-size: 15px; }
.wright .count { gap: 6px; padding-right: 3px; }
.toolbar { display: flex; align-items: center; height: 48px; padding-left: 7px; color: #2b2b2b; }
.query { display: flex; width: 215px; height: 31px; border: 1px solid #eee; border-radius: 4px; }
.query input { flex: 1; min-width: 0; padding-left: 6px; font-size: 14px; }
.query input::placeholder { color: #aaa; opacity: 1; }
.query button { width: 29px; border-left: 1px solid #f0f0f0; }
.tools { display: flex; margin-left: 14px; }
.tools + .tools { margin-left: 23px; }
.tools button { width: 39px; height: 32px; }
.off { color: #aaa; }
.titlebar { display: flex; align-items: center; justify-content: space-between; height: 41px; padding: 0 36px 0 9px; border-bottom: 1px solid #c3c8ce; }
h1 { font-size: 14px; line-height: 20px; font-weight: 700; color: #222; }
.pager { display: flex; align-items: center; gap: 36px; color: #888; font-size: 14px; }
.pager span { color: #333; margin: 0 -10px; }

.formwrap { display: flex; flex-wrap: wrap; height: 255px; background: #f5f9fd; }
.status { width: 100%; height: 42px; padding: 5px 7px; font-size: 14px; }
.grid { flex: 1; display: grid; grid-template-columns: 225px 425px 226px 421px; grid-auto-rows: 31px; row-gap: 15px; height: 213px; clip-path: inset(0 0 0 0); font-size: 14px; }
.grid label { text-align: right; padding: 6px 8px 0 0; color: #444; white-space: nowrap; }
.grid sup { font-size: 11px; line-height: 0; vertical-align: 7px; }
.grid u { text-underline-offset: 2px; }
.sel { position: relative; display: flex; background: #fff; border: 1px solid #f0f3f6; border-radius: 3px; }
.sel select { flex: 1; appearance: none; padding: 1px 6px 0; }
.sel > span { width: 30px; display: flex; align-items: center; justify-content: center; border-left: 1px solid #f0f3f6; color: #111; pointer-events: none; }
.active { border: 1px solid #2f8fdc; border-radius: 5px; }
.active select { background: #ffffcc; border-radius: 4px 0 0 4px; }
.active > span { border-left: 1px solid #2f8fdc; }
.menu { position: absolute; z-index: 2; left: 0; top: 34px; width: 425px; padding: 4px; background: #fff; border: 2px solid #3f97df; border-radius: 5px; box-shadow: 0 3px 6px rgba(0,0,0,.35); line-height: 27px; }
.menu li { padding: 0 3px; }
.menu .hover { background: #def0fe; }
.menu .chosen { color: #2196f3; }
.hand { position: absolute; z-index: 3; left: 159px; top: 46px; width: 24px; height: 28px; }
.date { display: flex; gap: 6px; }
.date input { width: 115px; padding: 0 6px; background: #fff; }
.date button { width: 30px; background: #fff; }
.fscroll { width: 25px; display: flex; flex-direction: column; align-items: center; padding-bottom: 10px; height: 217px; margin-top: -4px; color: #888; }
.fscroll i { width: 10px; height: 31px; margin: 35px 0 auto; border-radius: 5px; background: #8a8a8a; }
.hsplit { display: flex; align-items: center; justify-content: center; gap: 32px; height: 12px; padding-bottom: 3px; color: #aaa; background: #fafcff; }
.hsplit .grip { height: 2px; width: 10px; border: 0; border-top: 2px dotted #aaa; }

.detail { flex: 1; margin: 0 5px 2px 6px; border: 1px solid #cdd6df; background: #fff; font-size: 14px; }
.dtabs { display: flex; height: 41px; border-bottom: 1px solid #e1e5e9; color: #aaa; }
.dtabs .on { width: 110px; text-align: center; line-height: 38px; color: #2196f3; border-bottom: 3px solid #3d7cab; }
.dtabs div { display: flex; background: #f0f0f0; gap: 17px; padding: 0 16px 0 2px; }
.dtabs div a { display: flex; align-items: center; gap: 2px; padding-bottom: 2px; }
.dtabs svg { color: #444; }
.dtools { display: flex; align-items: center; height: 39px; padding: 12px 0 0 7px; color: #999; }
.dtools button { width: 34px; height: 24px; }
.dtools span { color: #333; margin-left: 24px; }
.gridbox { margin: 1px 6px 0 8px; background: #f5f8fd; height: 161px; display: flex; flex-direction: column; justify-content: space-between; }
table { table-layout: fixed; width: 100%; border-collapse: collapse; }
.c58 { width: 58px; } .c77 { width: 77px; } .c139 { width: 139px; } .c208 { width: 208px; } .c209 { width: 209px; } .c131 { width: 131px; } .c154 { width: 154px; } .c158 { width: 158px; }
th { height: 33px; padding: 0 0 0 3px; background: #e1f2fe; border-right: 1px solid #bfd3e2; border-bottom: 1px solid #a9c6da; text-align: left; font-weight: 400; color: #3d4f5e; white-space: nowrap; }
th:last-child { border-right: 0; }
th input { appearance: none; display: block; width: 18px; height: 18px; margin-left: 6px; background: #fff; border: 1px solid #e6e6e6; border-radius: 4px; }
td { height: 40px; padding: 0 7px; background: #fff; color: #aaa; }
.hscroll { display: flex; align-items: center; height: 19px; background: #fafafa; color: #777; }
.hscroll b { width: 57px; height: 19px; background: #d8f0fd; margin-right: 6px; }
.hscroll i { width: 429px; height: 11px; margin-left: 6px; background: #8a8a8a; border-radius: 6px; }
.hscroll .end { margin: 0 5px 0 auto; }

/* taskbar */
.taskbar { display: flex; align-items: center; height: 62px; padding-bottom: 3px; background: #1c1c1c; }
.weather { gap: 11px; width: 488px; justify-content: flex-start; padding-left: 26px; text-align: left; }
.wicon { position: relative; }
.wicon b { position: absolute; left: 14px; top: -7px; width: 20px; height: 20px; border-radius: 10px; background: #ff8f9c; color: #222; font-weight: 400; font-size: 13px; text-align: center; }
.two { display: flex; flex-direction: column; line-height: 21px; }
.two small { font-size: 15px; color: #bbb; }
.apps { display: flex; align-items: center; }
.apps button { width: 57px; height: 54px; position: relative; }
.apps .tsearch { margin: 0 3px 0 5px; }
.tsearch { display: flex; align-items: center; gap: 14px; width: 288px; height: 43px; padding: 0 9px 0 15px; border-radius: 22px; background: #3b3b3b; border-top: 1px solid #555; color: #d0d0d0; }
.tsearch input { flex: 1; min-width: 0; font-size: 17px; }
.tsearch input::placeholder { color: #c4c4c4; opacity: 1; }
.bowl { width: 56px; height: 34px; }
.apps .current { background: #2a2a2a; width: 51px; margin: 0 4px; border-radius: 5px; }
.running::after, .current::after { content: ""; position: absolute; bottom: 1px; height: 4px; border-radius: 2px; width: 8px; background: #999; }
.current::after { width: 21px; background: #d9a0dc; }
.tray { margin-left: auto; display: flex; align-items: center; gap: 10px; padding-right: 27px; }
.tray > svg:nth-child(1) { margin-right: 15px; }
.tray > svg:nth-child(2) { margin-right: 10px; }
.clock { display: flex; flex-direction: column; align-items: flex-end; width: 93px; line-height: 21px; }
.pre { position: relative; margin-left: 11px; }
.pre b { position: absolute; left: 7px; bottom: -1px; background: #fbc916; color: #222; font-size: 8px; line-height: 9px; padding: 0 4px; border-radius: 2px; }

/* meeting rail */
.people { width: 246px; padding-top: 164px; display: flex; flex-direction: column; gap: 35px; color: #fff; font-size: 15px; }
.people figure { display: flex; flex-direction: column; align-items: flex-start; padding-left: 16px; }
.face { width: 164px; height: 164px; margin-left: 22px; border-radius: 50%; display: flex; align-items: center; justify-content: center; font-size: 62px; font-weight: 600; }
.teal { background: #4a798c; } .sand { background: #fcebd8; color: #8b5a28; } .pink { background: #f5d5e0; color: #6e1e3a; }
figcaption { padding: 0 5px; line-height: 25px; border-radius: 4px; }
.talking { background: #6264a7; }
.presenter { color: #fff; padding: 40px 13px 0; font-size: 15px; }
```
